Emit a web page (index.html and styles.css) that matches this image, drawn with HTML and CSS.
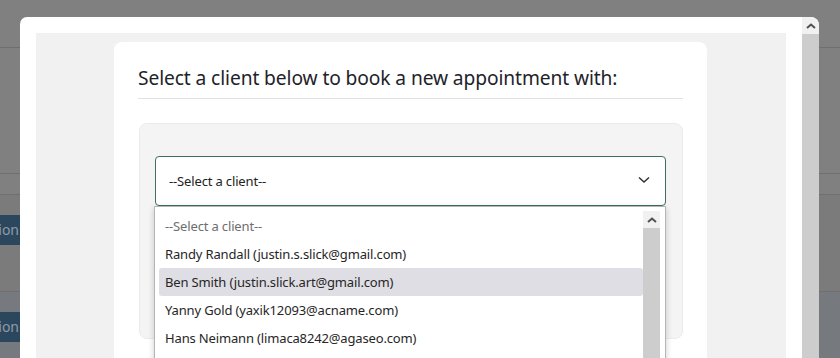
FILE: index.html
```html
<!DOCTYPE html>
<html lang="en">
<head>
    <meta charset="UTF-8">
    <meta name="viewport" content="width=device-width, initial-scale=1.0">
    <title>Appointments</title>
    <link rel="stylesheet" href="styles.css">
</head>
<body>
    <!-- page behind the modal (already dimmed) -->
    <div class="pagina">
        <div class="linha topo"></div>
        <div class="linha l1"></div>
        <div class="linha l2"></div>
        <div class="linha l3"><span class="btn">Book session</span></div>
        <div class="linha l4"><span class="btn">Book session</span></div>
    </div>

    <div class="modal">
        <div class="modal-corpo">
            <div class="painel">
                <div class="cartao">
                    <h2 class="titulo">Select a client below to book a new appointment with:</h2>
                    <div class="caixa">
                        <div class="campo">
                            <div class="select">
                                <span>--Select a client--</span>
                                <svg class="seta" width="12" height="8" viewBox="0 0 12 8"><path d="M1 1.5 L6 6 L11 1.5" fill="none" stroke="#333" stroke-width="1.5"/></svg>
                            </div>
                            <div class="lista">
                                <div class="opcoes">
                                    <div class="opcao vazia">--Select a client--</div>
                                    <div class="opcao">Randy Randall (justin.s.slick@gmail.com)</div>
                                    <div class="opcao ativa">Ben Smith (justin.slick.art@gmail.com)</div>
                                    <div class="opcao">Yanny Gold (yaxik12093@acname.com)</div>
                                    <div class="opcao">Hans Neimann (limaca8242@agaseo.com)</div>
                                </div>
                                <div class="barra">
                                    <div class="barra-seta"><svg width="10" height="6" viewBox="0 0 10 6"><path d="M1 5 L5 1.5 L9 5" fill="none" stroke="#505050" stroke-width="2"/></svg></div>
                                    <div class="barra-trilho"></div>
                                </div>
                            </div>
                        </div>
                    </div>
                </div>
            </div>
        </div>
        <div class="barra barra-modal">
            <div class="barra-seta"><svg width="10" height="6" viewBox="0 0 10 6"><path d="M1 5 L5 1.5 L9 5" fill="none" stroke="#505050" stroke-width="2"/></svg></div>
            <div class="barra-trilho"></div>
        </div>
    </div>
</body>
</html>
```

FILE: styles.css
```css
body { margin: 0; height: 358px; overflow: hidden; background: #808080; font-family: "Noto Sans", "Open Sans", sans-serif; }

.pagina { display: flex; flex-direction: column; }
.linha { border-bottom: 1px solid #6f6f6f; background: #808080; }
.topo { height: 47px; }
.l1 { height: 125px; }
.l2 { height: 20px; }
.l3 { height: 76px; padding-top: 20px; background: #7b7b7b; }
.l4 { height: 80px; padding-top: 20px; background: #767a7e; border-bottom: none; }
.btn { display: block; width: 100px; height: 30px; line-height: 30px; margin-left: -81px; background: #2b475e; color: #8d9aa6; font-size: 14px; padding-right: 5px; text-align: right; white-space: nowrap; overflow: hidden; }

.modal { position: fixed; top: 17px; left: 20px; width: 799px; bottom: 0; display: flex; background: #fff; border-radius: 7px 8px 0 0; overflow: hidden; }
.modal-corpo { flex: 1; padding: 16px 16px 0 16px; }
.painel { background: #f1f1f1; height: 100%; padding-top: 9px; }
.cartao { width: 545px; margin-left: 78px; background: #fff; border-radius: 8px; padding: 24px 24px 41px 24px; }

.titulo { margin: 0; font-size: 19.2px; font-weight: 400; line-height: 24px; color: #1e2329; padding-bottom: 8px; border-bottom: 1px solid #dee2e6; letter-spacing: -0.1px; }

.caixa { margin-top: 24px; margin-left: 1px; height: 182px; background: #f4f4f4; border: 1px solid #ebebeb; border-radius: 8px; padding: 32px 16px 0 15px; }
.campo { position: relative; }
.select { height: 48px; border: 1px solid #3c6e63; border-radius: 4px; background: #fff; display: flex; align-items: center; justify-content: space-between; padding: 0 15px 0 13px; font-size: 13px; letter-spacing: -0.15px; color: #222; }
.seta { margin-top: -2px; }

.lista { position: absolute; top: 50px; left: -1px; width: 501px; height: 160px; background: #fff; border: 1px solid #b5b5b5; border-radius: 0 0 4px 4px; box-shadow: 0 2px 6px rgba(0,0,0,0.2); display: flex; padding: 5px 5px 0 4px; }
.opcoes { flex: 1; }
.opcao { height: 28px; line-height: 28px; padding-left: 6px; font-size: 13px; letter-spacing: -0.15px; color: #262626; border-radius: 3px; white-space: nowrap; }
.opcao.vazia { color: #6e6e6e; }
.opcao.ativa { background: #dfdee4; }

.barra { width: 17px; display: flex; flex-direction: column; }
.lista .barra { margin-top: -1px; }
.barra-seta { height: 17px; background: #f1f1f1; display: flex; align-items: center; justify-content: center; }
.barra-trilho { flex: 1; background: #cdcdcd; }
.barra-modal { border-top-right-radius: 8px; overflow: hidden; }
```
